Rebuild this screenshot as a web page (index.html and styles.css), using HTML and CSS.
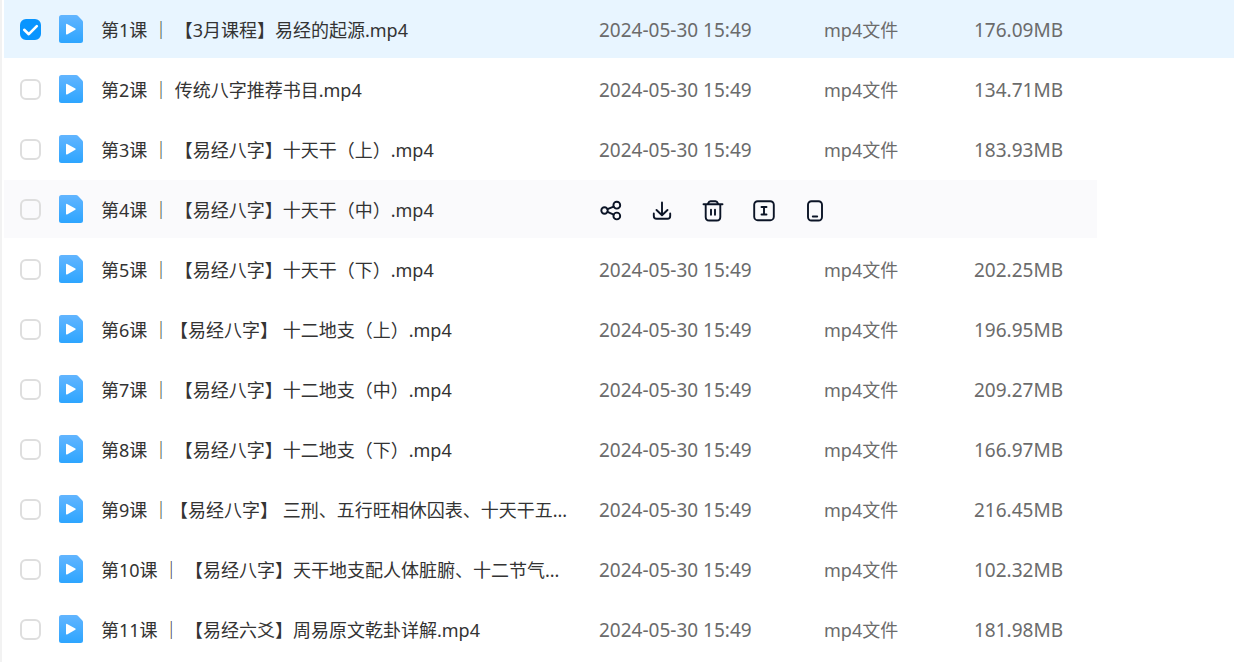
FILE: index.html
```html
<!DOCTYPE html>
<html lang="zh-CN">
<head>
    <meta charset="UTF-8">
    <meta name="viewport" content="width=device-width, initial-scale=1.0">
    <title>文件列表</title>
    <link rel="stylesheet" href="styles.css">
</head>
<body>
    <svg class="sprite" aria-hidden="true">
        <defs>
            <linearGradient id="videoFill" x1="0" y1="0" x2="0" y2="1">
                <stop offset="0" stop-color="#62b5ff"/>
                <stop offset="1" stop-color="#2da5ff"/>
            </linearGradient>
        </defs>
        <symbol id="video" viewBox="0 0 24 28">
            <path fill="url(#videoFill)" d="M2.500 0H17.2Q18 0 18.6.6L23.4 5.6Q24 6.200 24 7V25.500Q24 28 21.500 28H2.500Q0 28 0 25.500V2.500Q0 0 2.500 0Z"/>
            <path fill="#fff" d="M7 9.600Q7 8.400 8.100 9L16.300 13.600Q17.200 14.200 16.300 14.800L8.100 19.400Q7 20 7 18.800Z"/>
        </symbol>
        <symbol id="tick" viewBox="0 0 21 21">
            <path d="M4.200 10.800 8.800 15.200 16.800 7.200"/>
        </symbol>
    </svg>

    <main class="file-list">
        <table>
            <colgroup>
                <col class="col-check">
                <col class="col-icon">
                <col class="col-name">
                <col class="col-date">
                <col class="col-type">
                <col class="col-size">
                <col class="col-rest">
            </colgroup>
            <tbody>
                <tr class="selected">
                    <td><label class="check"><input type="checkbox" aria-label="第1课" checked><svg><use href="#tick"/></svg></label></td>
                    <td><svg class="file-icon"><use href="#video"/></svg></td>
                    <td class="name"><a href="#">第1课 ｜ 【3月课程】易经的起源.mp4</a></td>
                    <td class="date">2024-05-30 15:49</td>
                    <td class="type">mp4文件</td>
                    <td class="size">176.09MB</td>
                    <td class="rest"></td>
                </tr>
                <tr>
                    <td><label class="check"><input type="checkbox" aria-label="第2课"><svg><use href="#tick"/></svg></label></td>
                    <td><svg class="file-icon"><use href="#video"/></svg></td>
                    <td class="name"><a href="#">第2课 ｜ 传统八字推荐书目.mp4</a></td>
                    <td class="date">2024-05-30 15:49</td>
                    <td class="type">mp4文件</td>
                    <td class="size">134.71MB</td>
                    <td class="rest"></td>
                </tr>
                <tr>
                    <td><label class="check"><input type="checkbox" aria-label="第3课"><svg><use href="#tick"/></svg></label></td>
                    <td><svg class="file-icon"><use href="#video"/></svg></td>
                    <td class="name"><a href="#">第3课 ｜ 【易经八字】十天干（上）.mp4</a></td>
                    <td class="date">2024-05-30 15:49</td>
                    <td class="type">mp4文件</td>
                    <td class="size">183.93MB</td>
                    <td class="rest"></td>
                </tr>
                <tr class="active">
                    <td><label class="check"><input type="checkbox" aria-label="第4课"><svg><use href="#tick"/></svg></label></td>
                    <td><svg class="file-icon"><use href="#video"/></svg></td>
                    <td class="name"><a href="#">第4课 ｜ 【易经八字】十天干（中）.mp4</a></td>
                    <td colspan="3">
                        <div class="actions">
                            <button type="button" aria-label="分享">
                                <svg viewBox="0 0 24 24"><circle cx="5.500" cy="11.500" r="3.200"/><circle cx="17.800" cy="6.200" r="3.400"/><circle cx="17.800" cy="17" r="3.400"/><path d="M8.500 10.200 14.600 7.600M8.500 12.900 14.700 15.600"/></svg>
                            </button>
                            <button type="button" aria-label="下载">
                                <svg viewBox="0 0 24 24"><path d="M12 3.500V16M6.500 11 12 16.300 17.500 11M3.800 14.500V17Q3.800 19.800 6.600 19.800H17.400Q20.200 19.800 20.200 17V14.500"/></svg>
                            </button>
                            <button type="button" aria-label="删除">
                                <svg viewBox="0 0 24 24"><path d="M2.500 5.300H21.500M4.700 5.300V18Q4.700 21.500 8.200 21.500H15.800Q19.300 21.500 19.300 18V5.300M6.500 5.300C7.500 3.300 8 2.200 9.500 2.200H14.500C16 2.200 16.500 3.300 17.500 5.300M10 10.700V15.800M14 10.700V15.800"/></svg>
                            </button>
                            <button type="button" aria-label="重命名">
                                <svg viewBox="0 0 24 24"><rect x="2.200" y="2.200" width="19.600" height="19" rx="3.500"/><path d="M9.500 8H14.500M12 8V15.500M9.500 15.500H14.500"/></svg>
                            </button>
                            <button type="button" aria-label="发送到手机">
                                <svg viewBox="0 0 24 24"><rect x="5" y="2.200" width="14" height="19.300" rx="3.500"/><path d="M9.800 17.500H14.200"/></svg>
                            </button>
                        </div>
                    </td>
                    <td class="rest"></td>
                </tr>
                <tr>
                    <td><label class="check"><input type="checkbox" aria-label="第5课"><svg><use href="#tick"/></svg></label></td>
                    <td><svg class="file-icon"><use href="#video"/></svg></td>
                    <td class="name"><a href="#">第5课 ｜ 【易经八字】十天干（下）.mp4</a></td>
                    <td class="date">2024-05-30 15:49</td>
                    <td class="type">mp4文件</td>
                    <td class="size">202.25MB</td>
                    <td class="rest"></td>
                </tr>
                <tr>
                    <td><label class="check"><input type="checkbox" aria-label="第6课"><svg><use href="#tick"/></svg></label></td>
                    <td><svg class="file-icon"><use href="#video"/></svg></td>
                    <td class="name"><a href="#">第6课 ｜【易经八字】 十二地支（上）.mp4</a></td>
                    <td class="date">2024-05-30 15:49</td>
                    <td class="type">mp4文件</td>
                    <td class="size">196.95MB</td>
                    <td class="rest"></td>
                </tr>
                <tr>
                    <td><label class="check"><input type="checkbox" aria-label="第7课"><svg><use href="#tick"/></svg></label></td>
                    <td><svg class="file-icon"><use href="#video"/></svg></td>
                    <td class="name"><a href="#">第7课 ｜ 【易经八字】十二地支（中）.mp4</a></td>
                    <td class="date">2024-05-30 15:49</td>
                    <td class="type">mp4文件</td>
                    <td class="size">209.27MB</td>
                    <td class="rest"></td>
                </tr>
                <tr>
                    <td><label class="check"><input type="checkbox" aria-label="第8课"><svg><use href="#tick"/></svg></label></td>
                    <td><svg class="file-icon"><use href="#video"/></svg></td>
                    <td class="name"><a href="#">第8课 ｜ 【易经八字】十二地支（下）.mp4</a></td>
                    <td class="date">2024-05-30 15:49</td>
                    <td class="type">mp4文件</td>
                    <td class="size">166.97MB</td>
                    <td class="rest"></td>
                </tr>
                <tr>
                    <td><label class="check"><input type="checkbox" aria-label="第9课"><svg><use href="#tick"/></svg></label></td>
                    <td><svg class="file-icon"><use href="#video"/></svg></td>
                    <td class="name"><a href="#">第9课 ｜【易经八字】 三刑、五行旺相休囚表、十天干五...</a></td>
                    <td class="date">2024-05-30 15:49</td>
                    <td class="type">mp4文件</td>
                    <td class="size">216.45MB</td>
                    <td class="rest"></td>
                </tr>
                <tr>
                    <td><label class="check"><input type="checkbox" aria-label="第10课"><svg><use href="#tick"/></svg></label></td>
                    <td><svg class="file-icon"><use href="#video"/></svg></td>
                    <td class="name"><a href="#">第10课 ｜ 【易经八字】天干地支配人体脏腑、十二节气...</a></td>
                    <td class="date">2024-05-30 15:49</td>
                    <td class="type">mp4文件</td>
                    <td class="size">102.32MB</td>
                    <td class="rest"></td>
                </tr>
                <tr>
                    <td><label class="check"><input type="checkbox" aria-label="第11课"><svg><use href="#tick"/></svg></label></td>
                    <td><svg class="file-icon"><use href="#video"/></svg></td>
                    <td class="name"><a href="#">第11课 ｜ 【易经六爻】周易原文乾卦详解.mp4</a></td>
                    <td class="date">2024-05-30 15:49</td>
                    <td class="type">mp4文件</td>
                    <td class="size">181.98MB</td>
                    <td class="rest"></td>
                </tr>
            </tbody>
        </table>
    </main>
</body>
</html>
```

FILE: styles.css
```css
* {
    box-sizing: border-box;
}
body {
    margin: 0;
    background: #fff;
    color: #333;
    font-family: "Noto Sans", "Noto Sans CJK SC", sans-serif;
    font-size: 18px;
    line-height: 28px;
    text-spacing-trim: space-all;
}
.sprite {
    position: absolute;
    width: 0;
    height: 0;
}
.file-list {
    min-height: 100vh;
    padding-left: 2px;
    border-left: 2px solid #f2f2f2;
}
table {
    width: 100%;
    table-layout: fixed;
    border-collapse: separate;
    border-spacing: 0;
}
.col-check {
    width: 55px;
}
.col-icon {
    width: 42px;
}
.col-date {
    width: 225px;
}
.col-type {
    width: 150px;
}
.col-size {
    width: 123px;
}
.col-rest {
    width: 137px;
}
td {
    height: 60px;
    padding: 0;
    border-bottom: 2px solid transparent;
    background-clip: padding-box;
    vertical-align: middle;
    white-space: nowrap;
}
.selected td {
    background-color: #e8f5ff;
}
.active td:not(.rest) {
    background-color: #fafafc;
}

/* checkbox */
.check {
    display: grid;
    width: 21px;
    height: 21px;
    margin-left: 16px;
    cursor: pointer;
}
.check input,
.check svg {
    grid-area: 1 / 1;
    width: 21px;
    height: 21px;
    margin: 0;
}
.check input {
    appearance: none;
    border: 2px solid #dedede;
    border-radius: 6px;
}
.check input:checked {
    border-color: #0995ff;
    background: #0995ff;
}
.check svg {
    visibility: hidden;
    pointer-events: none;
    fill: none;
    stroke: #fff;
    stroke-width: 2.6;
    stroke-linecap: round;
    stroke-linejoin: round;
}
.check input:checked + svg {
    visibility: visible;
}

.file-icon {
    display: block;
    width: 24px;
    height: 28px;
}
.name {
    overflow: hidden;
    text-overflow: ellipsis;
}
.name a {
    color: inherit;
    text-decoration: none;
}
.name,
.date,
.type,
.size {
    padding-top: 2px;
}
.date,
.type,
.size {
    color: #6b6b6b;
}
.date,
.size {
    font-size: 19px;
}

/* row buttons */
.actions {
    display: flex;
    gap: 27px;
    padding-top: 4px;
}
.actions button {
    width: 24px;
    height: 24px;
    padding: 0;
    border: none;
    background: none;
    cursor: pointer;
}
.actions svg {
    display: block;
    width: 24px;
    height: 24px;
    fill: none;
    stroke: #0b1426;
    stroke-width: 1.9;
    stroke-linecap: round;
    stroke-linejoin: round;
}
```
